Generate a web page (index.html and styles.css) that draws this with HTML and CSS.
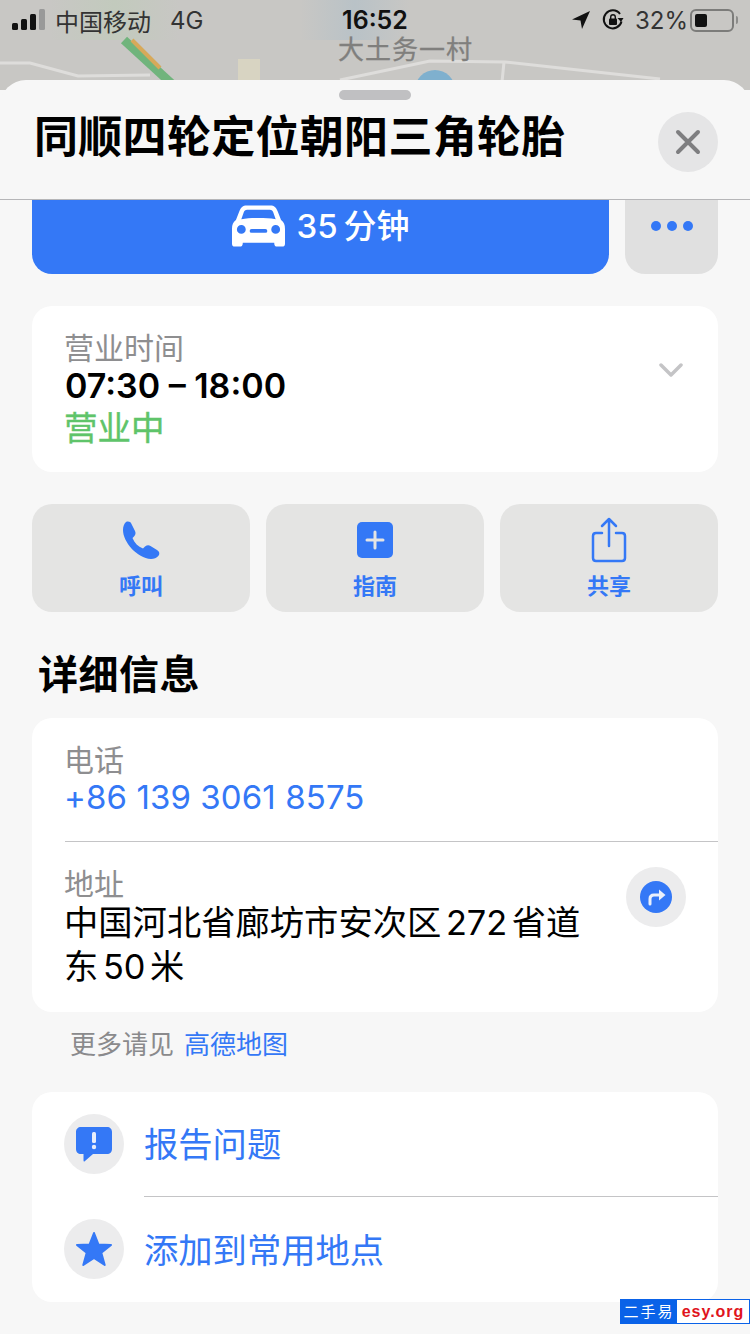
FILE: index.html
```html
<!doctype html>
<html lang="en">
<head>
    <meta charset="UTF-8">
    <title>同顺四轮定位朝阳三角轮胎</title>
    <link rel="stylesheet" href="styles.css">
</head>
<body>
<div class="phone">
    <div class="map">
        <svg class="map_art" width="750" height="90" viewBox="0 0 750 90">
            <defs>
                <linearGradient id="tint_green" x1="0" x2="1" y1="0" y2="0">
                    <stop offset="0" stop-color="#c2cabd" stop-opacity="0"/>
                    <stop offset="0.5" stop-color="#c2cabd"/>
                    <stop offset="1" stop-color="#c2cabd" stop-opacity="0"/>
                </linearGradient>
                <linearGradient id="tint_blue" x1="0" x2="1" y1="0" y2="0">
                    <stop offset="0" stop-color="#b9c2c7" stop-opacity="0"/>
                    <stop offset="0.5" stop-color="#b9c2c7"/>
                    <stop offset="1" stop-color="#b9c2c7" stop-opacity="0"/>
                </linearGradient>
            </defs>
            <rect x="0" y="0" width="750" height="90" fill="#c8c7c4"/>
            <rect x="50" y="0" width="130" height="40" fill="url(#tint_green)"/>
            <rect x="300" y="0" width="110" height="40" fill="url(#tint_blue)"/>
            <path d="M0 63 L30 63 L78 76 L150 75" fill="none" stroke="#dedddb" stroke-width="3"/>
            <path d="M340 80 L430 61 L505 62 L660 79" fill="none" stroke="#dedddb" stroke-width="3"/>
            <path d="M504 62 L502 82" fill="none" stroke="#dedddb" stroke-width="3"/>
            <path d="M124 40 L172 84" fill="none" stroke="#70b47c" stroke-width="9"/>
            <path d="M132 40 L160 68" fill="none" stroke="#d7a95a" stroke-width="4"/>
            <rect x="238" y="59" width="22" height="25" fill="#d8d4c2"/>
            <ellipse cx="435" cy="90" rx="20" ry="20" fill="#7fb0ce"/>
        </svg>
        <div class="map_label">大土务一村</div>
        <div class="status">
            <div class="status_left">
                <svg class="signal" width="34" height="22" viewBox="0 0 34 22">
                    <rect x="0" y="14" width="6" height="7" rx="1.5" fill="#111"/>
                    <rect x="9" y="10" width="6" height="11" rx="1.5" fill="#111"/>
                    <rect x="18" y="5" width="6" height="16" rx="1.5" fill="#111"/>
                    <rect x="27" y="0" width="6" height="21" rx="1.5" fill="#999"/>
                </svg>
                <span>中国移动</span>
                <span class="net">4G</span>
            </div>
            <div class="status_time">16:52</div>
            <div class="status_right">
                <svg width="20" height="20" viewBox="0 0 20 20"><path d="M19 1 L1 9.5 L9.5 10.5 L11 19 Z" fill="#111"/></svg>
                <svg class="lock" width="24" height="24" viewBox="0 0 24 24">
                    <path d="M20.5 13.5 A9 9 0 1 1 19 6" fill="none" stroke="#111" stroke-width="2"/>
                    <path d="M22.5 10 L16.5 10 L20 14 Z" fill="#111"/>
                    <rect x="8" y="10.5" width="8" height="6.5" rx="1" fill="#111"/>
                    <path d="M9.7 11 V9 A2.3 2.3 0 0 1 14.3 9 V11" fill="none" stroke="#111" stroke-width="1.4"/>
                </svg>
                <span class="percent">32%</span>
                <div class="battery"><div class="battery_level"></div></div>
                <div class="battery_tip"></div>
            </div>
        </div>
    </div>

    <div class="sheet">
        <div class="sheet_head">
            <div class="grabber"></div>
            <h1>同顺四轮定位朝阳三角轮胎</h1>
            <div class="close">
                <svg width="26" height="26" viewBox="0 0 26 26"><path d="M3 3 L23 23 M23 3 L3 23" stroke="#7e7e80" stroke-width="4" stroke-linecap="round"/></svg>
            </div>
        </div>

        <div class="sheet_body">
            <div class="route_row">
                <div class="route_btn">
                    <svg width="53" height="42" viewBox="0 0 54 42">
                        <path fill-rule="evenodd" fill="#fff" d="M15 0 H39 C43 0 45 2 46.500 6 L50 15 C53 17 54 20 54 24 V39 C54 41 53 42 51 42 H46 C44 42 43 41 43 38 H11 C11 41 10 42 8 42 H3 C1 42 0 41 0 39 V24 C0 20 1 17 4 15 L7.500 6 C9 2 11 0 15 0 Z M15.500 4.500 C13.500 4.500 12.500 5.500 12 7 L9.500 14 C20 12.500 34 12.500 44.500 14 L42 7 C41.500 5.500 40.500 4.500 38.500 4.500 Z M9.500 20 A4.500 4.500 0 1 0 9.501 29 A4.500 4.500 0 0 0 9.500 20 Z M44.500 20 A4.500 4.500 0 1 0 44.501 29 A4.500 4.500 0 0 0 44.500 20 Z M20 24 A2 2 0 0 0 20 28 H34 A2 2 0 0 0 34 24 Z"/>
                    </svg>
                    <span>35 分钟</span>
                </div>
                <div class="more_btn">
                    <i></i><i></i><i></i>
                </div>
            </div>

            <div class="card hours">
                <div>
                    <div class="label">营业时间</div>
                    <div class="hours_time">07:30 – 18:00</div>
                    <div class="hours_open">营业中</div>
                </div>
                <svg class="chevron" width="24" height="15" viewBox="0 0 24 15"><path d="M2 2 L12 12 L22 2" fill="none" stroke="#c4c4c6" stroke-width="3.500" stroke-linecap="round" stroke-linejoin="round"/></svg>
            </div>

            <div class="actions">
                <div class="action">
                    <div class="action_icon">
                        <svg width="38" height="38" viewBox="0 0 38 38"><path fill="#3478f6" d="M4 1 C6 0 8.500 0.500 9.500 3 L13 10 C14 12 13.500 14 12 15.500 L10.500 17 C12.500 22 16 25.500 21 27.500 L23 25.500 C25 24 27 24 28.500 25 L35 29 C37.500 30.500 38 33 36.500 34.800 C34.500 37 32 38 29 38 C15 37 1 21 1 9 C1 5.500 2 3 4 1 Z"/></svg>
                    </div>
                    <span>呼叫</span>
                </div>
                <div class="action">
                    <div class="action_icon">
                        <svg width="36" height="36" viewBox="0 0 36 36"><rect width="36" height="36" rx="5" fill="#3478f6"/><path d="M18 10 V26 M10 18 H26" stroke="#e4e4e4" stroke-width="3" stroke-linecap="round"/></svg>
                    </div>
                    <span>指南</span>
                </div>
                <div class="action">
                    <div class="action_icon">
                        <svg width="36" height="46" viewBox="0 0 36 46"><path d="M11 16 H5 C3 16 2 17 2 19 V41 C2 43 3 44 5 44 H31 C33 44 34 43 34 41 V19 C34 17 33 16 31 16 H25" fill="none" stroke="#3478f6" stroke-width="2.500" stroke-linecap="round"/><path d="M18 29 V2 M11 9 L18 2 L25 9" fill="none" stroke="#3478f6" stroke-width="2.500" stroke-linecap="round" stroke-linejoin="round"/></svg>
                    </div>
                    <span>共享</span>
                </div>
            </div>

            <h2>详细信息</h2>

            <div class="card details">
                <div class="detail_phone">
                    <div class="label">电话</div>
                    <div class="phone_no">+86 139 3061 8575</div>
                </div>
                <div class="detail_addr">
                    <div class="addr_text">
                        <div class="label">地址</div>
                        <div class="addr">中国河北省廊坊市安次区 272 省道<br>东 50 米</div>
                    </div>
                    <div class="round_icon">
                        <svg width="32" height="32" viewBox="0 0 32 32">
                            <circle cx="16" cy="16" r="16" fill="#3478f6"/>
                            <path d="M10 23 V18 C10 15.500 11.500 14 14 14 H21" fill="none" stroke="#eaf0fb" stroke-width="3" stroke-linecap="round"/>
                            <path d="M19 8.500 L25.500 14 L19 19.500 Z" fill="#eaf0fb"/>
                        </svg>
                    </div>
                </div>
            </div>

            <div class="more_info">更多请见<span>高德地图</span></div>

            <div class="card links">
                <div class="link_row">
                    <div class="round_icon">
                        <svg width="38" height="36" viewBox="0 0 38 36"><path fill="#3478f6" d="M6 1 H32 C35 1 37 3 37 6 V23 C37 26 35 28 32 28 H18 L10 35 C9 36 8.500 35.500 8.500 34 V28 H6 C3 28 1 26 1 23 V6 C1 3 3 1 6 1 Z"/><rect x="17" y="6" width="4" height="11" rx="1.500" fill="#e8eefb"/><circle cx="19" cy="21" r="2.200" fill="#e8eefb"/></svg>
                    </div>
                    <div class="link_text">报告问题</div>
                </div>
                <div class="link_row">
                    <div class="round_icon">
                        <svg width="38" height="36" viewBox="0 0 38 36"><path fill="#3478f6" stroke="#3478f6" stroke-width="2" stroke-linejoin="round" d="M19 2 L23.500 13.500 L36 14 L26.300 21.800 L29.700 34 L19 27 L8.300 34 L11.700 21.800 L2 14 L14.500 13.500 Z"/></svg>
                    </div>
                    <div class="link_text">添加到常用地点</div>
                </div>
            </div>
        </div>
    </div>

    <div class="mark"><span class="mark_cn">二手易</span><span class="mark_en">esy.org</span></div>
</div>
</body>
</html>
```

FILE: styles.css
```css
* {
    margin: 0;
    padding: 0;
    box-sizing: border-box;
}

body {
    width: 750px;
    height: 1334px;
    overflow: hidden;
    background: #f7f7f7;
    font-family: Inter, "Noto Sans CJK SC", sans-serif;
}

.phone {
    position: relative;
    width: 750px;
    height: 1334px;
    overflow: hidden;
}

.map {
    position: relative;
    height: 90px;
    margin-bottom: -10px;
}

.map_art {
    display: block;
}

.map_label {
    position: absolute;
    left: 338px;
    top: 36px;
    font-size: 26px;
    line-height: 28px;
    letter-spacing: 1px;
    -webkit-text-stroke: 0.3px #807f7d;
    color: #807f7d;
}

.status {
    position: absolute;
    left: 0;
    top: 0;
    width: 750px;
    height: 40px;
    padding: 0 12px;
    display: grid;
    grid-template-columns: 1fr auto 1fr;
    align-items: center;
    font-size: 24px;
    color: #333;
}

.status_left {
    display: flex;
    align-items: center;
}

.signal {
    margin-right: 9px;
}

.net {
    margin-left: 19px;
}

.status_time {
    font-size: 25px;
    font-weight: 600;
    color: #111;
}

.status_right {
    display: flex;
    align-items: center;
    justify-content: flex-end;
}

.lock {
    margin-left: 10px;
}

.percent {
    margin-left: 10px;
}

.battery {
    width: 44px;
    height: 23px;
    margin-left: 2px;
    padding: 3px;
    border: 2px solid #7c7c7a;
    border-radius: 6px;
}

.battery_level {
    width: 12px;
    height: 13px;
    background: #111;
    border-radius: 2px;
}

.battery_tip {
    width: 2px;
    height: 8px;
    margin-left: 2px;
    background: #8c8c8a;
    border-radius: 0 2px 2px 0;
}

.sheet {
    position: relative;
    background: #f7f7f7;
    border-radius: 26px 26px 0 0;
}

.sheet_head {
    position: relative;
    height: 120px;
    padding: 28px 34px 0;
    border-bottom: 1px solid #b6b6b8;
}

.grabber {
    position: absolute;
    left: 339px;
    top: 10px;
    width: 72px;
    height: 10px;
    background: #c0c0c2;
    border-radius: 5px;
}

h1 {
    font-size: 44px;
    line-height: 58px;
    font-weight: bold;
    letter-spacing: 0.3px;
    color: #000;
}

.close {
    position: absolute;
    left: 658px;
    top: 32px;
    width: 60px;
    height: 60px;
    display: flex;
    align-items: center;
    justify-content: center;
    background: #e5e5e6;
    border-radius: 50%;
}

.sheet_body {
    padding: 0 32px;
}

.route_row {
    display: flex;
    gap: 16px;
    height: 74px;
}

.route_btn {
    flex: 1;
    display: flex;
    align-items: center;
    justify-content: center;
    gap: 12px;
    padding-bottom: 22px;
    color: #fff;
    font-size: 33px;
    font-weight: 500;
    word-spacing: -3px;
    background: #3478f6;
    border-radius: 0 0 20px 20px;
}

.route_btn span {
    margin-bottom: 5px;
}

.more_btn {
    width: 93px;
    padding-bottom: 22px;
    display: flex;
    align-items: center;
    justify-content: center;
    gap: 6px;
    background: #e0e0e0;
    border-radius: 0 0 20px 20px;
}

.more_btn i {
    width: 10px;
    height: 10px;
    background: #3478f6;
    border-radius: 50%;
}

.card {
    background: #fff;
    border-radius: 20px;
}

.label {
    margin-left: -1px;
    font-size: 30px;
    line-height: 30px;
    color: #8e8e90;
}

.hours {
    height: 166px;
    margin-top: 32px;
    padding: 27px 33px 0;
    display: flex;
    justify-content: space-between;
}

.hours_time {
    margin-top: 2px;
    font-size: 34px;
    line-height: 42px;
    font-weight: 600;
    color: #000;
}

.hours_open {
    margin-left: -1px;
    font-size: 33.500px;
    line-height: 42px;
    -webkit-text-stroke: 0.4px #5fc46a;
    color: #5fc46a;
}

.chevron {
    margin: 30px 2px 0 0;
}

.actions {
    display: flex;
    gap: 16px;
    margin-top: 32px;
}

.action {
    flex: 1;
    height: 108px;
    display: flex;
    flex-direction: column;
    align-items: center;
    justify-content: space-between;
    padding: 13px 0 13px;
    font-size: 22px;
    line-height: 26px;
    font-weight: bold;
    color: #3478f6;
    background: #e4e4e3;
    border-radius: 20px;
}

.action_icon {
    height: 46px;
    display: flex;
    align-items: center;
}

h2 {
    margin: 40px 0 20px 6px;
    font-size: 40px;
    line-height: 46px;
    font-weight: bold;
    letter-spacing: 0.5px;
    color: #000;
}

.details {
    height: 294px;
    padding-left: 33px;
}

.detail_phone {
    height: 124px;
    padding-top: 27px;
    border-bottom: 1px solid #c4c4c6;
}

.phone_no {
    margin: 1px 0 0 -1px;
    font-size: 33px;
    line-height: 42px;
    letter-spacing: 0.1px;
    color: #3478f6;
}

.detail_addr {
    display: flex;
    justify-content: space-between;
    padding: 25px 32px 0 0;
}

.addr_text {
    padding-top: 2px;
}

.addr {
    margin: 2px 0 0 -1px;
    font-size: 34.300px;
    line-height: 44px;
    word-spacing: -5px;
    color: #000;
}

.round_icon {
    width: 60px;
    height: 60px;
    flex: none;
    margin-top: -1px;
    display: flex;
    align-items: center;
    justify-content: center;
    background: #ececed;
    border-radius: 50%;
}

.detail_addr .round_icon {
    margin-top: 0;
}

.more_info {
    height: 80px;
    padding: 15px 0 0 38px;
    font-size: 26px;
    line-height: 36px;
    color: #8a8a8c;
}

.more_info span {
    margin-left: 10px;
    color: #3478f6;
}

.links {
    height: 210px;
    padding-left: 32px;
}

.link_row {
    display: flex;
    align-items: center;
    gap: 20px;
    height: 105px;
}

.link_text {
    flex: 1;
    height: 100%;
    padding-bottom: 4px;
    display: flex;
    align-items: center;
    font-size: 34.300px;
    color: #3478f6;
}

.link_row:first-child .link_text {
    border-bottom: 1px solid #c4c4c6;
}

.mark {
    position: absolute;
    right: 0;
    bottom: 10px;
    width: 130px;
    height: 25px;
    display: flex;
    border: 1px solid #0a62e8;
    background: #fff;
}

.mark_cn {
    width: 56px;
    text-align: center;
    font-size: 15px;
    line-height: 23px;
    letter-spacing: 2px;
    color: #fff;
    background: #0a62e8;
}

.mark_en {
    flex: 1;
    text-align: center;
    font-family: "Liberation Sans", sans-serif;
    font-size: 16px;
    line-height: 23px;
    font-weight: bold;
    letter-spacing: 1px;
    color: #e0141c;
}
```
